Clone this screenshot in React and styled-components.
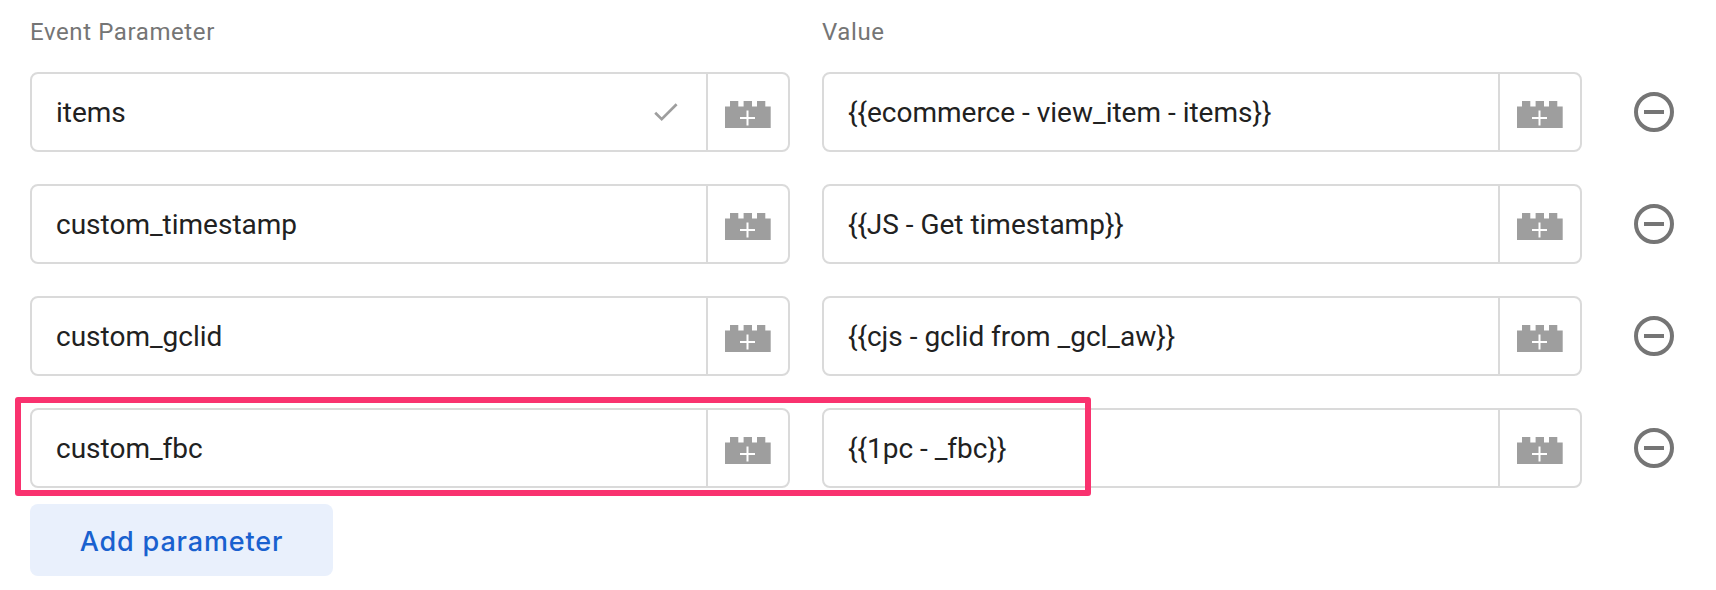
import React from "react";
import styled, { createGlobalStyle } from "styled-components";

const GlobalStyle = createGlobalStyle`
  * { box-sizing: border-box; }
  body { margin: 0; background: #fff; font-family: Roboto, "Liberation Sans", sans-serif; }
`;

const Panel = styled.main`
  width: 1716px;
  height: 590px;
  padding: 16px 42px 0 30px;
  overflow: hidden;
  background: #fff;
`;

const columns = `
  display: grid;
  grid-template-columns: 760px 760px 40px;
  column-gap: 32px;
  align-items: center;
`;

const Header = styled.div`
  ${columns}
  height: 32px;
  margin-bottom: 24px;
`;

const Label = styled.span`
  color: #757575;
  font-size: 24px;
  line-height: 32px;
  letter-spacing: 0.6px;
`;

const Rows = styled.div`
  display: flex;
  flex-direction: column;
  gap: 32px;
`;

const Row = styled.div`
  ${columns}
  position: relative;
`;

const Field = styled.div`
  display: flex;
  height: 80px;
  border: 2px solid #dadada;
  border-radius: 8px;
`;

const FieldText = styled.div`
  flex: 1;
  display: flex;
  align-items: center;
  justify-content: space-between;
  padding: 0 28px 0 24px;
  color: #212121;
  font-size: 28px;
  line-height: 40px;
  white-space: pre;

  span {
    padding-top: 2px;
  }
`;

const VariableButton = styled.button`
  width: 82px;
  padding: 5px 0 0;
  border: 0;
  border-left: 2px solid #dadada;
  background: none;
  display: flex;
  align-items: center;
  justify-content: center;
`;

const RemoveButton = styled.button`
  width: 40px;
  height: 40px;
  margin-left: 20px;
  padding: 0;
  border: 0;
  background: none;
  display: flex;
`;

const Highlight = styled.div`
  position: absolute;
  left: -15px;
  top: -11px;
  width: 1076px;
  height: 99px;
  border: 6px solid #f9326f;
  border-radius: 3px;
  pointer-events: none;
`;

const AddButton = styled.button`
  width: 303px;
  height: 72px;
  margin-top: 16px;
  padding: 2px 0 0;
  border: 0;
  border-radius: 8px;
  background: #e9f0fc;
  color: #1961cf;
  font-family: Inter, Roboto, sans-serif;
  font-size: 27px;
  font-weight: 500;
  letter-spacing: 0.85px;
  display: flex;
  align-items: center;
  justify-content: center;
`;

const Check = () => (
  <svg width="24" height="20" viewBox="0 0 24 20" fill="none">
    <path d="M1.2 10.8 7.7 17.2 22.6 2.3" stroke="#9e9e9e" strokeWidth="2.7" />
  </svg>
);

const Brick = () => (
  <svg width="46" height="27" viewBox="0 0 46 27">
    <path d="M0 5.6H5V0H13.3V5.6H18.6V0H27V5.6H32V0H40.3V5.6H45.7V27H0Z" fill="#9e9e9e" />
    <path d="M15 17H30M22.5 9.5V24.5" stroke="#fff" strokeWidth="2" />
  </svg>
);

const Minus = () => (
  <svg width="40" height="40" viewBox="0 0 40 40" fill="none" stroke="#757575" strokeWidth="4">
    <circle cx="20" cy="20" r="18" />
    <path d="M10 20H30" />
  </svg>
);

const VariableField = ({ value, valid, label }) => (
  <Field>
    <FieldText>
      <span>{value}</span>
      {valid && <Check />}
    </FieldText>
    <VariableButton aria-label={label}>
      <Brick />
    </VariableButton>
  </Field>
);

const parameters = [
  { name: "items", value: "{{ecommerce - view_item - items}}", valid: true },
  { name: "custom_timestamp", value: "{{JS - Get timestamp}}" },
  { name: "custom_gclid", value: "{{cjs - gclid from _gcl_aw}}" },
  { name: "custom_fbc", value: "{{1pc - _fbc}}", highlighted: true },
];

export default function App() {
  return (
    <>
      <GlobalStyle />
      <Panel>
        <Header>
          <Label>Event Parameter</Label>
          <Label>Value</Label>
        </Header>
        <Rows>
          {parameters.map((p) => (
            <Row key={p.name}>
              <VariableField value={p.name} valid={p.valid} label="Choose a variable" />
              <VariableField value={p.value} label="Choose a variable" />
              <RemoveButton aria-label="Remove parameter">
                <Minus />
              </RemoveButton>
              {p.highlighted && <Highlight />}
            </Row>
          ))}
        </Rows>
        <AddButton>Add parameter</AddButton>
      </Panel>
    </>
  );
}
